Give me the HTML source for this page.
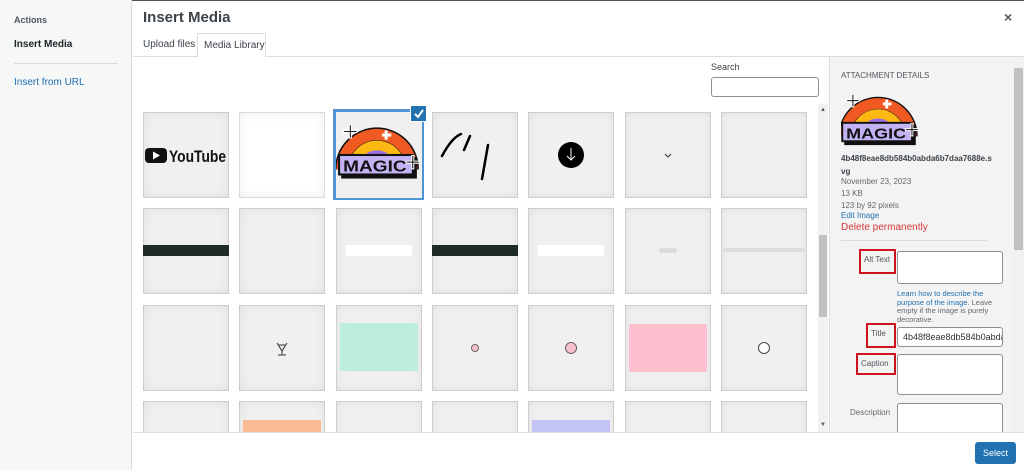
<!DOCTYPE html>
<html style="width:1024px;height:470px;overflow:hidden"><head><meta charset="utf-8"><style>
*{box-sizing:border-box;margin:0;padding:0}
body{width:1024px;height:470px;overflow:hidden;font-family:"Liberation Sans",Arial,sans-serif;background:#fff;position:relative;color:#1d2327}
.a{position:absolute}
.t{position:absolute;width:86px;height:86px;background:#f0f0f0;box-shadow:inset 0 0 12px rgba(0,0,0,.08),inset 0 0 0 1px rgba(0,0,0,.1);overflow:hidden}
.lbl{position:absolute;font-size:8px;color:#50575e;border:2px solid #d0121f;padding:4px 3px;background:#f3f3f3}
.inp{position:absolute;background:#fff;border:1px solid #8c8f94;border-radius:3px}
#grid{position:absolute;left:0;top:0;width:829px;height:432px;overflow:hidden}
</style></head><body>
<div class="a" style="left:0;top:0;width:1024px;height:1px;background:#555"></div>
<div class="a" style="left:0;top:0;width:132px;height:470px;background:#f6f7f7;border-right:1px solid #dcdcde"></div>
<div class="a" style="left:14px;top:15px;font-size:9px;font-weight:bold;color:#50575e">Actions</div>
<div class="a" style="left:14px;top:39px;font-size:10px;font-weight:bold">Insert Media</div>
<div class="a" style="left:14px;top:63px;width:104px;height:1px;background:#dcdcde"></div>
<div class="a" style="left:14px;top:77px;font-size:10px;color:#2271b1">Insert from URL</div>
<div class="a" style="left:143px;top:9px;font-size:15px;font-weight:bold;color:#3c434a">Insert Media</div>
<div class="a" style="left:1004px;top:9px;font-size:14px;font-weight:bold;color:#50575e">×</div>
<div class="a" style="left:133px;top:56px;width:891px;height:1px;background:#dcdcde"></div>
<div class="a" style="left:143px;top:39px;font-size:10px;color:#3c434a">Upload files</div>
<div class="a" style="left:197px;top:33px;width:69px;height:24px;background:#fff;border:1px solid #dcdcde;border-bottom:none;font-size:10px;color:#3c434a;padding:6px 0 0 6px">Media Library</div>
<div class="a" style="left:711px;top:62px;font-size:9px;color:#3c434a">Search</div>
<div class="inp" style="left:711px;top:77px;width:108px;height:20px"></div>
<div id="grid">
<div class="t" style="left:143px;top:112px"><svg width="86" height="86"><rect x="2" y="36" width="22" height="15" rx="4" fill="#111"/><path d="M10 39.5v8l7-4z" fill="#fff"/><text x="26" y="50" font-size="17" font-weight="bold" fill="#111" textLength="57" lengthAdjust="spacingAndGlyphs">YouTube</text></svg></div>
<div class="t" style="left:239px;top:112px;background:#fff"></div>
<div class="a" style="left:333px;top:109px;width:91px;height:91px;border:3px solid #4f94d4"></div>
<div class="t" style="left:336px;top:112px;box-shadow:none"><svg width="86" height="86" viewBox="0 2 84 84"><path d="M6 58a34 34 0 0 1 68 0" fill="none" stroke="#111" stroke-width="14"/><path d="M6 58a34 34 0 0 1 68 0" fill="none" stroke="#f05a22" stroke-width="11"/><path d="M17 58a23 23 0 0 1 46 0" fill="none" stroke="#fdb913" stroke-width="10"/><path d="M26 58a14 14 0 0 1 28 0" fill="none" stroke="#9b6ce0" stroke-width="9"/><rect x="5" y="46" width="74" height="21" fill="#111"/><rect x="3" y="44" width="72" height="19" fill="#c3b3f5" stroke="#111" stroke-width="2"/><text x="7" y="60" font-size="15" font-weight="bold" fill="#111" textLength="62" lengthAdjust="spacingAndGlyphs">MAGIC</text><path d="M14 14v14M7 21h14M49 20v9M45 24.5h9M75 44v14M68 51h14" stroke="#fff" stroke-width="3"/><path d="M14 15v12M8 21h12M75 45v12M69 51h12" stroke="#111" stroke-width="1"/></svg></div>
<div class="a" style="left:410px;top:105px;width:17px;height:17px;background:#2271b1;border:1px solid #fff"><svg width="15" height="15"><path d="M4 8l3 3 5-7" fill="none" stroke="#fff" stroke-width="2"/></svg></div>
<div class="t" style="left:432px;top:112px"><svg width="86" height="86"><path d="M10 44c8-15 14-20 19-22M38 24l-6 14M56 33l-6 34" stroke="#000" stroke-width="2.5" fill="none" stroke-linecap="round"/></svg></div>
<div class="t" style="left:528px;top:112px"><svg width="86" height="86"><circle cx="43" cy="43" r="13" fill="#000"/><path d="M43 36v12M39 44l4 4 4-4" stroke="#fff" stroke-width="1" fill="none"/></svg></div>
<div class="t" style="left:625px;top:112px"><svg width="86" height="86"><path d="M40 42l3 3 3-3" stroke="#333" fill="none"/></svg></div>
<div class="t" style="left:721px;top:112px"></div>
<div class="t" style="left:143px;top:208px"><div class="a" style="left:0;top:37px;width:86px;height:11px;background:#1f2b24"></div></div>
<div class="t" style="left:239px;top:208px"></div>
<div class="t" style="left:336px;top:208px"><div class="a" style="left:10px;top:37px;width:66px;height:11px;background:#fff"></div></div>
<div class="t" style="left:432px;top:208px"><div class="a" style="left:0;top:37px;width:86px;height:11px;background:#1f2b24"></div></div>
<div class="t" style="left:528px;top:208px"><div class="a" style="left:10px;top:37px;width:66px;height:11px;background:#fff"></div></div>
<div class="t" style="left:625px;top:208px"><div class="a" style="left:34px;top:40px;width:18px;height:5px;border-radius:3px;background:#dcdcdc"></div></div>
<div class="t" style="left:721px;top:208px"><div class="a" style="left:2px;top:40px;width:82px;height:4px;background:#dedede"></div></div>
<div class="t" style="left:143px;top:305px"></div>
<div class="t" style="left:239px;top:305px"><svg width="86" height="86"><path d="M38 38l5 8 5-8M43 46v4M39 50h8M40 40h6" stroke="#333" fill="none"/></svg></div>
<div class="t" style="left:336px;top:305px"><div class="a" style="left:4px;top:18px;width:78px;height:48px;background:#bdeedd"></div></div>
<div class="t" style="left:432px;top:305px"><svg width="86" height="86"><circle cx="43" cy="43" r="3.5" fill="#f8bfcc" stroke="#444" stroke-width=".8"/></svg></div>
<div class="t" style="left:528px;top:305px"><svg width="86" height="86"><circle cx="43" cy="43" r="5.5" fill="#f8bfcc" stroke="#444" stroke-width=".8"/></svg></div>
<div class="t" style="left:625px;top:305px"><div class="a" style="left:4px;top:19px;width:78px;height:48px;background:#fec0ce"></div></div>
<div class="t" style="left:721px;top:305px"><svg width="86" height="86"><circle cx="43" cy="43" r="5.5" fill="#fff" stroke="#444" stroke-width="1"/></svg></div>
<div class="t" style="left:143px;top:401px"></div>
<div class="t" style="left:239px;top:401px"><div class="a" style="left:4px;top:19px;width:78px;height:20px;background:#f8bb94"></div></div>
<div class="t" style="left:336px;top:401px"></div>
<div class="t" style="left:432px;top:401px"></div>
<div class="t" style="left:528px;top:401px"><div class="a" style="left:4px;top:19px;width:78px;height:20px;background:#c3c3f5"></div></div>
<div class="t" style="left:625px;top:401px"></div>
<div class="t" style="left:721px;top:401px"></div>
</div>
<div class="a" style="left:818px;top:104px;width:10px;height:328px;background:#f1f1f1"></div>
<div class="a" style="left:819px;top:235px;width:8px;height:82px;background:#c1c1c1"></div>
<div class="a" style="left:820px;top:107px;font-size:6px;color:#555">▲</div>
<div class="a" style="left:820px;top:422px;font-size:6px;color:#555">▼</div>
<div class="a" style="left:829px;top:57px;width:195px;height:375px;background:#f3f3f3;border-left:1px solid #dcdcde"></div>
<div class="a" style="left:1013px;top:57px;width:11px;height:375px;background:#f1f1f1"></div>
<div class="a" style="left:1014px;top:68px;width:9px;height:182px;background:#c1c1c1"></div>
<div class="a" style="left:841px;top:71px;font-size:8px;color:#50575e">ATTACHMENT DETAILS</div>
<div class="a" style="left:841px;top:88px;width:78px;height:60px;overflow:hidden"><svg width="78" height="60" viewBox="2 8 80 62"><path d="M6 58a34 34 0 0 1 68 0" fill="none" stroke="#111" stroke-width="14"/><path d="M6 58a34 34 0 0 1 68 0" fill="none" stroke="#f05a22" stroke-width="11"/><path d="M17 58a23 23 0 0 1 46 0" fill="none" stroke="#fdb913" stroke-width="10"/><path d="M26 58a14 14 0 0 1 28 0" fill="none" stroke="#9b6ce0" stroke-width="9"/><rect x="5" y="46" width="74" height="21" fill="#111"/><rect x="3" y="44" width="72" height="19" fill="#c3b3f5" stroke="#111" stroke-width="2"/><text x="7" y="60" font-size="15" font-weight="bold" fill="#111" textLength="62" lengthAdjust="spacingAndGlyphs">MAGIC</text><path d="M14 14v14M7 21h14M49 20v9M45 24.5h9M75 44v14M68 51h14" stroke="#fff" stroke-width="3"/><path d="M14 15v12M8 21h12M75 45v12M69 51h12" stroke="#111" stroke-width="1"/></svg></div>
<div class="a" style="left:841px;top:152px;font-size:8px;font-weight:bold;color:#3c434a;line-height:13px;width:170px">4b48f8eae8db584b0abda6b7daa7688e.s<br>vg</div>
<div class="a" style="left:841px;top:176px;font-size:8px;color:#646970;line-height:12px">November 23, 2023<br>13 KB<br>123 by 92 pixels</div>
<div class="a" style="left:841px;top:211px;font-size:8px;color:#2271b1">Edit Image</div>
<div class="a" style="left:841px;top:222px;font-size:10px;color:#d63638">Delete permanently</div>
<div class="a" style="left:841px;top:240px;width:146px;height:1px;background:#dcdcde"></div>
<div class="lbl" style="left:859px;top:249px;width:37px;height:25px">Alt Text</div>
<div class="inp" style="left:897px;top:251px;width:106px;height:33px"></div>
<div class="a" style="left:897px;top:290px;font-size:7.5px;color:#646970;line-height:8.5px;width:110px"><span style="color:#2271b1">Learn how to describe the purpose of the image</span>. Leave empty if the image is purely decorative.</div>
<div class="lbl" style="left:866px;top:323px;width:30px;height:25px">Title</div>
<div class="inp" style="left:897px;top:327px;width:106px;height:20px;font-size:9px;color:#2c3338;padding:4px 0 0 5px;overflow:hidden;white-space:nowrap">4b48f8eae8db584b0abda</div>
<div class="lbl" style="left:856px;top:353px;width:40px;height:22px">Caption</div>
<div class="inp" style="left:897px;top:354px;width:106px;height:41px"></div>
<div class="a" style="left:850px;top:408px;font-size:8px;color:#646970">Description</div>
<div style="position:absolute;left:829px;top:400px;width:184px;height:32px;overflow:hidden"><div class="inp" style="left:68px;top:3px;width:106px;height:40px"></div></div>
<div class="a" style="left:133px;top:432px;width:891px;height:38px;background:#fff;border-top:1px solid #dcdcde"></div>
<div class="a" style="left:975px;top:442px;width:41px;height:22px;background:#2271b1;border-radius:3px;color:#fff;font-size:9px;text-align:center;line-height:22px">Select</div>
</body></html>
